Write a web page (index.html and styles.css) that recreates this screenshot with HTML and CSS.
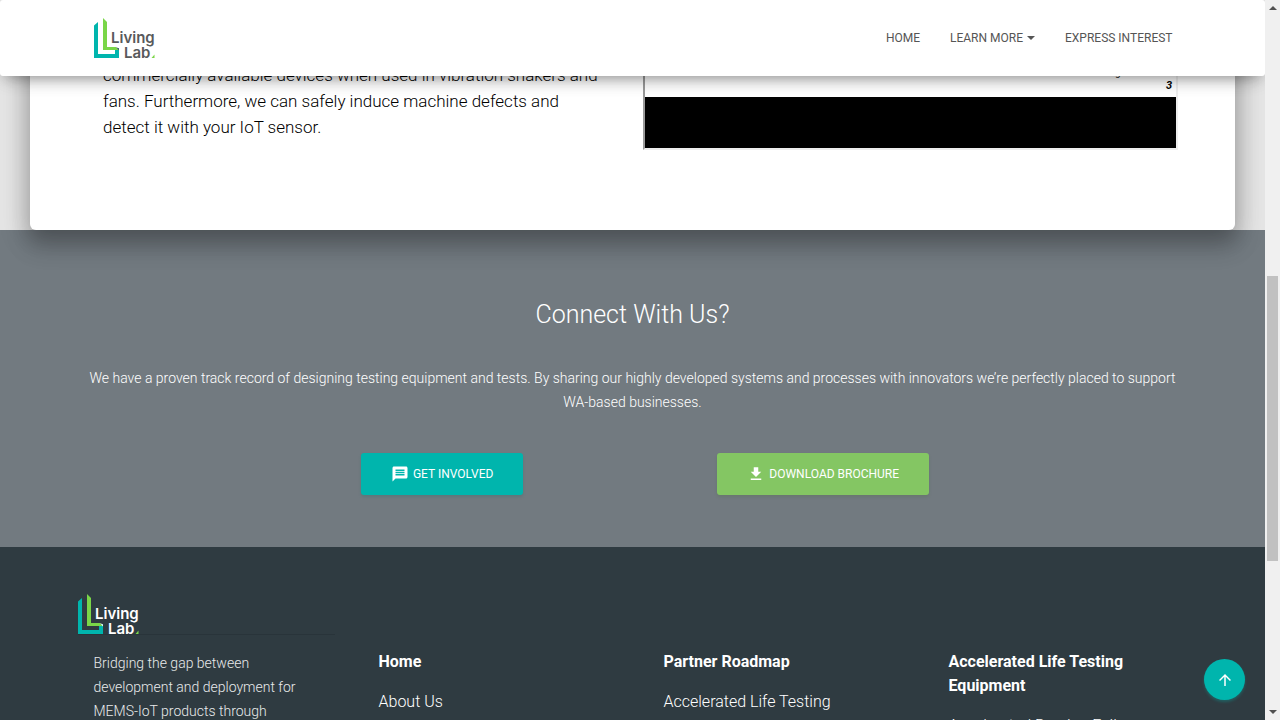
FILE: index.html
```html
<!DOCTYPE html>
<html lang="en">
<head>
<meta charset="utf-8">
<title>Living Lab</title>
<link rel="stylesheet" href="styles.css">
</head>
<body>
<div class="page">
  <header class="navbar">
    <div class="container navbar-inner">
      <a class="brand" href="#" aria-label="Living Lab">
        <svg class="logo" viewBox="0 0 61 40" width="61" height="40">
          <path class="logo-teal" d="M0 7.500L4 4v32h17v-5.500l4-0.500v10H0z"/>
          <path class="logo-green" d="M9 0l4 4v25h9l2.500 3H9zM57.500 40l3-3.500v3.500z"/>
          <path class="logo-ink" d="M22 29l3 1.500v2z"/>
          <text class="logo-ink" x="17" y="25">Living</text>
          <text class="logo-ink" x="30" y="40">Lab</text>
        </svg>
      </a>
      <nav class="menu">
        <a href="#">Home</a>
        <a href="#">Learn More<span class="caret"></span></a>
        <a href="#">Express Interest</a>
      </nav>
    </div>
  </header>

  <div class="stage">
    <main class="card">
      <p class="copy">commercially available devices when used in vibration shakers and fans. Furthermore, we can safely induce machine defects and detect it with your IoT sensor.</p>
      <div class="viewer">
        <div class="slide">
          <span>Accelerated life testing in Australia</span>
          <span class="slide-number">3</span>
        </div>
        <div class="letterbox"></div>
      </div>
    </main>
  </div>

  <section class="connect">
    <h2>Connect With Us?</h2>
    <p>We have a proven track record of designing testing equipment and tests. By sharing our highly developed systems and processes with innovators we’re perfectly placed to support <span class="keep">WA-based</span> businesses.</p>
    <div class="actions">
      <button class="btn btn-teal" type="button">
        <svg viewBox="0 0 24 24" width="18" height="18"><path d="M20 2H4c-1.100 0-1.990.9-1.990 2L2 22l4-4h14c1.100 0 2-.9 2-2V4c0-1.100-.9-2-2-2zM6 9h12v2H6V9zm12 5H6v-2h12v2zm0-6H6V6h12v2z"/></svg>
        Get Involved
      </button>
      <button class="btn btn-green" type="button">
        <svg viewBox="0 0 24 24" width="18" height="18"><path d="M19 9h-4V3H9v6H5l7 7 7-7zM5 18v2h14v-2H5z"/></svg>
        Download Brochure
      </button>
    </div>
  </section>

  <footer class="footer">
    <div class="container footer-grid">
      <div class="about">
        <a class="footer-brand" href="#" aria-label="Living Lab">
          <svg class="logo logo-light" viewBox="0 0 61 40" width="61" height="40">
            <path class="logo-teal" d="M0 7.500L4 4v32h17v-5.500l4-0.500v10H0z"/>
            <path class="logo-green" d="M9 0l4 4v25h9l2.500 3H9zM57.500 40l3-3.500v3.500z"/>
            <path class="logo-ink" d="M22 29l3 1.500v2z"/>
            <text class="logo-ink" x="17" y="25">Living</text>
            <text class="logo-ink" x="30" y="40">Lab</text>
          </svg>
        </a>
        <p>Bridging the gap between development and deployment for MEMS-IoT products through</p>
      </div>
      <div class="links">
        <h3>Home</h3>
        <a href="#">About Us</a>
      </div>
      <div class="links">
        <h3>Partner Roadmap</h3>
        <a href="#">Accelerated Life Testing</a>
      </div>
      <div class="links">
        <h3>Accelerated Life Testing Equipment</h3>
        <a href="#">Accelerated Bearing Failure</a>
      </div>
    </div>
  </footer>

  <button class="to-top" type="button" aria-label="Back to top">
    <svg viewBox="0 0 24 24" width="18" height="18"><path d="M4 12l1.410 1.410L11 7.830V20h2V7.830l5.580 5.590L20 12l-8-8-8 8z"/></svg>
  </button>
</div>
<div class="scrollbar" aria-hidden="true">
  <span class="arrow arrow-up"></span>
  <span class="thumb"></span>
  <span class="arrow arrow-down"></span>
</div>
</body>
</html>
```
FILE: styles.css
```css
* {
  box-sizing: border-box;
}

body {
  margin: 0;
  height: 100vh;
  display: flex;
  overflow: hidden;
  font-family: Roboto, "Liberation Sans", sans-serif;
  font-weight: 300;
  background: #f0f0f0;
}

a {
  color: inherit;
  text-decoration: none;
}

.page {
  position: relative;
  flex: 1;
  overflow: hidden;
  background: #e5e5e5;
}

.container {
  max-width: 1140px;
  margin: 0 auto;
}

/* Navigation */
.navbar {
  position: absolute;
  inset: 0 0 auto;
  z-index: 3;
  background: #fff;
  border-radius: 3px;
  box-shadow: 0 10px 20px -12px rgba(0, 0, 0, 0.42), 0 3px 20px rgba(0, 0, 0, 0.12), 0 8px 10px -5px rgba(0, 0, 0, 0.1);
}

.navbar-inner {
  display: flex;
  justify-content: space-between;
  align-items: center;
  height: 76px;
  padding: 0 15px 0 31px;
}

.brand,
.footer-brand {
  display: block;
}

.logo {
  display: block;
  overflow: visible;
  font: 600 15px Inter, sans-serif;
}

.logo-teal {
  fill: #00b5ad;
}

.logo-green {
  fill: #7ad648;
}

.logo-ink {
  fill: #58595b;
}

.logo-light .logo-ink {
  fill: #fff;
}

.menu {
  display: flex;
  font-size: 12px;
  font-weight: 400;
  line-height: 20px;
  text-transform: uppercase;
  color: #555;
}

.menu a {
  display: flex;
  align-items: center;
  padding: 0 15px;
}

.caret {
  margin-left: 4px;
  border: 4px solid transparent;
  border-top-color: currentColor;
  border-bottom: 0;
}

/* Content card */
.card {
  position: relative;
  z-index: 2;
  display: grid;
  grid-template-columns: 1fr 1fr;
  gap: 5px;
  margin: 0 30px;
  padding: 0 57px 80px 73px;
  background: #fff;
  border-radius: 0 0 6px 6px;
  box-shadow: 0 16px 24px 2px rgba(0, 0, 0, 0.14), 0 6px 30px 5px rgba(0, 0, 0, 0.12), 0 8px 20px rgba(0, 0, 0, 0.14);
}

.copy {
  margin: 62px 0 0;
  max-width: 500px;
  font-size: 17px;
  line-height: 26px;
  color: #000;
}

.viewer {
  border: 2px inset #eee;
}

.slide {
  display: flex;
  flex-direction: column;
  align-items: flex-end;
  padding: 64px 4px 5px;
  font-size: 10px;
  font-weight: 400;
  font-style: italic;
  line-height: 13px;
  color: #222;
  background: #fff;
}

.slide-number {
  font-size: 11px;
  font-weight: 700;
  color: #000;
}

.letterbox {
  height: 51px;
  background: #000;
}

/* Call to action */
.connect {
  padding: 65px 88px 52px;
  text-align: center;
  color: #fff;
  background: #727a80;
}

.connect h2 {
  margin: 0 0 31px;
  font-size: 25px;
  font-weight: 300;
  line-height: 40px;
}

.connect p {
  margin: 0;
  font-size: 14px;
  line-height: 24px;
}

.keep {
  white-space: nowrap;
}

.actions {
  display: flex;
  justify-content: center;
  gap: 194px;
  padding: 39px 0 0 25px;
}

.btn {
  display: flex;
  align-items: center;
  gap: 4px;
  height: 42px;
  padding: 0 30px;
  border: 0;
  border-radius: 3px;
  font: 400 12px Roboto, sans-serif;
  text-transform: uppercase;
  color: #fff;
}

.btn svg,
.to-top svg {
  fill: currentColor;
}

.btn-teal {
  background: #00b5ad;
  box-shadow: 0 2px 3px rgba(0, 110, 105, 0.2);
}

.btn-green {
  background: #84c663;
  box-shadow: 0 2px 3px rgba(70, 110, 50, 0.2);
}

/* Footer */
.footer {
  padding-top: 47px;
  color: #fff;
  background: #2f3b41;
}

.footer-grid {
  display: grid;
  grid-template-columns: repeat(4, 1fr);
}

.about {
  padding-left: 15px;
}

.footer-brand {
  width: 257px;
  border-bottom: 1px solid #29343a;
}

.about p {
  margin: 16px 32px 0 16px;
  font-size: 14px;
  line-height: 24px;
  color: #e8eaeb;
}

.links {
  padding: 56px 30px 0 31px;
  font-size: 16px;
  line-height: 24px;
}

.links h3 {
  margin: 0 0 16px;
  font-size: 16px;
  font-weight: 700;
}

.links a {
  white-space: nowrap;
}

.to-top {
  position: absolute;
  right: 20px;
  bottom: 20px;
  display: grid;
  place-items: center;
  width: 41px;
  height: 41px;
  padding: 0;
  border: 0;
  border-radius: 50%;
  color: #fff;
  background: #00b5ad;
  box-shadow: 0 2px 3px rgba(0, 181, 173, 0.3);
}

/* Scroll track */
.scrollbar {
  display: grid;
  grid-template-rows: 259fr 285fr 142fr;
  justify-items: center;
  width: 15px;
  padding: 17px 0;
  position: relative;
}

.thumb {
  grid-row: 2;
  width: 11px;
  margin-right: 1px;
  background: #c1c1c1;
}

.arrow {
  position: absolute;
  left: 4px;
  border: 4px solid transparent;
}

.arrow-up {
  top: 6px;
  border-top: 0;
  border-bottom-color: #505050;
}

.arrow-down {
  bottom: 6px;
  border-bottom: 0;
  border-top-color: #505050;
}
```
